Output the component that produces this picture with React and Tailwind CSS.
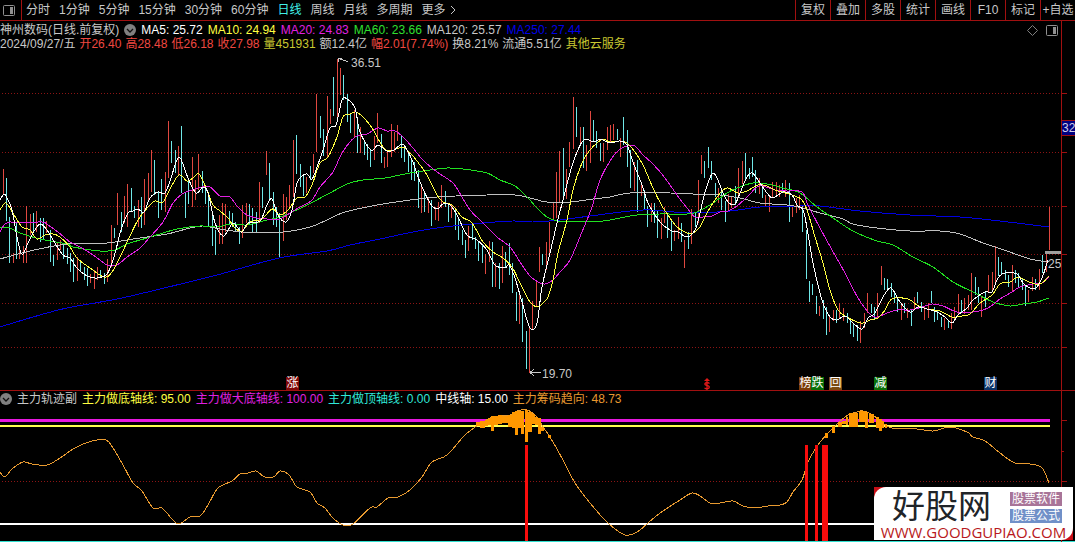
import { useState } from 'react';
import clsx from 'clsx';

const PERIODS = ['分时', '1分钟', '5分钟', '15分钟', '30分钟', '60分钟', '日线', '周线', '月线', '多周期'];
const TOOLS = ['复权', '叠加', '多股', '统计', '画线', 'F10', '标记', '+自选'];

const PLOT_WIDTH = 1061;
const PRICE_TOP = 51;
const PRICE_HEIGHT = 339;
const TREND_TOP = 407;
const TREND_HEIGHT = 135;

const MA_LEGEND = [
  { text: 'MA5: 25.72', color: 'text-white' },
  { text: 'MA10: 24.94', color: 'text-[#ffff40]' },
  { text: 'MA20: 24.83', color: 'text-[#e020e0]' },
  { text: 'MA60: 23.66', color: 'text-[#30e030]' },
  { text: 'MA120: 25.57', color: 'text-[#c8c8c8]' },
  { text: 'MA250: 27.44', color: 'text-[#0000e8]' },
];

const QUOTE = [
  { text: '2024/09/27/五', color: 'text-[#c8c8c8]' },
  { text: '开26.40', color: 'text-[#f04840]' },
  { text: '高28.48', color: 'text-[#f04840]' },
  { text: '低26.18', color: 'text-[#f04840]' },
  { text: '收27.98', color: 'text-[#f04840]' },
  { text: '量451931', color: 'text-[#c8c830]' },
  { text: '额12.4亿', color: 'text-[#c8c8c8]' },
  { text: '幅2.01(7.74%)', color: 'text-[#f04840]' },
  { text: '换8.21%', color: 'text-[#c8c8c8]' },
  { text: '流通5.51亿', color: 'text-[#c8c8c8]' },
  { text: '其他云服务', color: 'text-[#c8c830]' },
];

const TREND_LEGEND = [
  { text: '主力轨迹副', color: 'text-[#c8c8c8]' },
  { text: '主力做底轴线: 95.00', color: 'text-[#ffff40]' },
  { text: '主力做大底轴线: 100.00', color: 'text-[#e020e0]' },
  { text: '主力做顶轴线: 0.00', color: 'text-[#30e8d8]' },
  { text: '中线轴: 15.00', color: 'text-white' },
  { text: '主力筹码趋向: 48.73', color: 'text-[#e89830]' },
];

const MARKERS = [
  { x: 286, label: '涨', bg: 'bg-[#800808]' },
  { x: 799, label: '榜', bg: 'bg-[#7a3c08]' },
  { x: 811, label: '跌', bg: 'bg-[#087008]' },
  { x: 829, label: '回', bg: 'bg-[#7a4a10]' },
  { x: 874, label: '减', bg: 'bg-[#087008]' },
  { x: 984, label: '财', bg: 'bg-[#0c3468]' },
];

const GRID = [93, 152, 206, 254, 303, 347];

// x, high, low, direction
const BARS = `
3,169,195,r 6,178,221,c 9,217,263,c 13,253,263,r 16,223,259,c 19,247,259,r 23,246,263,r 26,206,263,r 30,214,235,r 33,213,232,c
36,211,232,r 40,218,242,c 43,218,240,c 46,221,233,r 50,230,262,c 53,255,266,c 57,243,260,r 60,240,250,r 63,245,259,c 67,248,264,c
70,253,272,c 73,258,282,c 77,257,281,r 80,260,272,c 84,267,280,c 87,268,286,c 90,274,283,r 94,270,289,r 97,267,280,r 100,270,277,c
104,273,284,c 107,259,282,r 111,225,267,r 114,228,238,c 117,193,225,r 121,212,232,c 124,196,223,r 127,184,227,r 131,188,211,c 134,206,218,c
138,200,227,r 141,197,228,c 144,179,225,r 148,173,200,r 151,150,192,r 154,160,195,c 158,192,218,c 161,179,210,c 165,172,212,r 168,121,178,r
171,141,163,c 175,150,173,c 178,146,175,r 181,126,193,c 185,192,218,c 188,180,204,c 192,157,207,r 195,180,200,r 198,154,190,r 202,171,193,c
205,185,204,c 208,193,227,c 212,215,246,c 215,230,255,c 219,215,244,r 222,203,244,r 225,204,232,r 229,211,225,c 232,213,227,c 235,222,232,c
239,227,244,c 242,205,238,r 246,203,223,r 249,204,225,c 252,208,232,c 256,212,232,c 259,182,223,r 262,187,208,c 266,151,175,r 269,163,200,c
273,192,225,c 276,207,227,c 279,213,258,c 283,194,241,r 286,197,220,r 289,185,208,r 293,140,197,r 296,135,174,c 300,164,187,c 303,175,196,c
306,177,193,r 310,166,180,c 313,154,173,r 316,94,152,r 320,116,138,c 323,129,156,c 327,96,158,r 330,109,124,r 333,77,116,c 337,59,122,r
340,68,95,r 343,75,100,c 347,94,122,c 350,113,133,c 354,110,138,r 357,117,153,c 360,127,153,r 364,141,155,c 367,144,160,c 370,150,167,c
374,136,160,r 377,113,143,r 381,134,163,c 384,157,168,r 387,152,167,r 391,124,157,r 394,132,152,r 397,125,141,r 401,135,158,c 404,145,162,c
408,152,172,c 411,160,180,c 414,162,181,c 418,170,208,c 421,187,213,r 424,193,212,c 428,198,213,r 431,200,226,c 435,207,220,r 438,202,221,r
441,185,208,r 445,191,207,c 448,203,222,c 451,205,218,r 455,209,230,c 458,217,240,c 462,230,245,c 465,240,258,c 468,226,251,r 472,224,240,c
475,237,249,c 478,242,261,c 482,244,263,c 485,254,274,r 489,241,262,r 492,242,287,c 495,263,287,r 499,263,289,c 502,246,283,r 505,252,267,c
509,243,275,c 512,263,293,c 516,292,321,c 519,295,324,r 522,298,342,c 526,331,369,c 529,327,373,r 532,301,330,r 536,282,307,r 539,247,272,r
542,254,265,c 546,242,270,r 549,222,254,r 553,202,221,r 556,172,218,r 559,151,202,r 563,148,199,c 566,169,199,r 569,142,167,r 573,97,149,r
576,107,137,c 580,127,143,r 583,127,168,c 586,145,171,r 590,111,163,r 593,120,142,c 596,131,148,c 600,143,161,c 603,143,162,r 607,127,150,r
610,125,142,r 613,124,140,r 617,129,140,c 620,138,157,r 623,117,145,c 627,130,167,c 630,150,188,c 634,162,191,r 637,160,212,c 641,182,196,r
644,190,209,c 647,206,227,c 651,203,222,r 654,203,223,c 657,211,238,c 661,218,239,r 664,207,223,r 667,214,238,c 671,220,251,c 674,230,241,r
678,217,239,r 681,223,242,c 684,240,268,r 688,232,249,c 691,209,244,r 695,213,227,c 698,180,223,r 701,155,174,r 704,161,178,c 708,147,168,c
711,161,180,c 715,183,197,c 718,188,203,r 721,192,210,c 725,201,222,c 728,194,212,r 731,196,208,r 735,186,205,c 738,168,197,r 742,161,184,r
745,153,180,c 749,168,179,c 752,157,177,c 755,170,193,c 759,178,194,r 762,187,198,c 765,195,206,r 769,197,212,r 772,182,197,r 776,182,197,r
779,185,197,r 782,183,192,c 785,180,197,r 789,183,222,c 792,205,217,r 796,198,213,r 799,195,210,r 802,205,232,c 806,230,279,c 809,281,302,c
812,284,295,c 816,296,314,c 819,306,316,r 823,300,319,c 826,307,335,c 829,316,332,r 833,310,321,r 836,310,323,c 839,303,318,r 843,308,321,r
847,313,323,c 850,320,334,c 853,323,337,c 857,325,341,c 860,321,343,r 864,313,328,r 867,293,313,r 871,304,313,c 874,307,320,c 877,293,318,r
881,266,285,r 884,278,290,c 887,279,289,c 891,283,297,c 894,292,303,c 897,298,312,c 901,303,320,r 904,303,313,c 907,308,318,r 911,309,326,c
914,297,310,r 917,292,303,c 921,302,312,c 924,307,320,r 928,303,318,r 931,291,303,c 934,307,322,c 937,310,320,c 941,317,327,c 944,318,330,r
948,320,328,c 951,313,329,r 954,307,321,r 958,294,314,r 961,300,313,c 964,298,314,r 968,295,310,r 971,273,310,r 975,277,295,c 978,287,303,c
981,297,317,r 985,292,307,c 988,275,292,r 992,272,292,r 995,246,282,r 998,257,276,c 1001,262,275,c 1005,270,280,c 1008,275,287,c 1012,265,292,r
1015,270,283,c 1018,273,287,c 1022,278,290,c 1025,286,306,c 1028,290,302,r 1032,277,291,r 1035,279,290,c 1039,269,290,r 1042,255,273,c
1046,253,272,r 1049,207,250,r
`.trim().split(/\s+/).map(s => s.split(','));

const MA_LINES = [
  {
    color: '#0000e0',
    points: '0,327 33,317 67,308 117,299 160,289 217,275 279,258 327,251 350,245 380,239 403,234 430,229 453,226 483,223 513,221 533,222 560,220 590,216 630,211 650,210 690,213 730,211 760,207 800,206 820,206 860,211 910,215 960,217 1000,221 1049,227',
  },
  {
    color: '#c0c0c0',
    points: '0,259 30,251 67,244 107,243 133,239 167,234 190,228 203,226 220,229 243,232 283,232 310,227 327,220 345,212 377,205 403,201 437,197 487,195 515,195 530,198 547,202 570,202 593,199 610,197 630,193 670,193 693,194 720,195 740,198 760,203 787,205 803,208 820,213 843,219 853,224 877,228 910,231 940,231 960,234 983,243 1007,251 1030,259 1049,262',
  },
  {
    color: '#20e020',
    points: '0,227 10,228 20,233 40,239 67,244 73,247 100,251 115,250 127,244 147,238 177,229 200,226 217,227 230,224 247,225 263,221 280,217 290,213 307,205 330,193 347,184 363,180 385,178 410,173 430,170 447,168 463,169 487,173 500,180 515,186 528,198 537,208 547,217 557,221 570,222 603,221 620,218 637,215 660,214 687,214 697,212 713,203 727,193 737,188 753,183 767,184 783,188 800,193 817,207 833,218 853,231 877,241 893,245 913,257 933,267 953,282 973,292 993,302 1010,306 1023,304 1037,302 1049,298',
  },
  {
    color: '#e020e0',
    points: '0,232 4,225 10,222 20,223 42,222 48,225 58,232 70,242 80,247 90,253 100,260 107,265 117,265 127,257 140,248 150,237 163,222 173,203 182,194 192,190 202,187 210,187 220,196 230,197 237,206 247,215 257,218 267,219 280,219 290,213 300,207 312,200 320,187 333,172 342,153 355,137 367,134 378,128 387,131 395,131 403,137 413,148 423,160 437,172 453,183 462,197 470,210 483,223 497,237 510,247 520,262 530,276 538,282 545,284 553,280 560,272 570,260 582,232 592,207 600,180 612,158 620,149 628,146 635,146 643,155 653,164 665,178 677,195 687,208 695,217 703,217 712,216 720,212 728,211 737,206 747,197 757,187 763,186 775,190 787,191 802,192 808,205 820,228 832,250 845,273 858,298 870,314 877,317 887,313 897,310 910,310 922,307 932,304 943,306 957,312 973,312 988,308 1000,299 1012,292 1020,287 1033,284 1042,283 1049,277',
  },
  {
    color: '#ffff40',
    points: '0,210 6,203 14,215 22,227 30,230 37,239 45,235 53,234 60,237 70,247 77,258 90,268 104,277 112,272 120,257 130,236 138,220 148,207 155,201 163,202 170,189 179,175 187,181 193,178 199,174 207,190 213,205 220,211 228,218 235,228 242,231 250,222 262,219 272,209 280,215 288,210 297,198 305,197 312,185 320,163 328,157 337,137 343,117 350,114 356,112 363,117 372,128 383,147 390,151 402,147 407,150 413,156 420,165 427,175 437,195 443,202 452,205 462,217 472,223 483,242 493,252 503,258 512,267 520,283 530,302 538,307 544,302 548,297 553,280 558,253 567,220 573,190 582,163 590,150 597,143 603,139 610,142 620,141 627,143 635,152 643,165 653,188 662,206 668,215 677,227 687,233 693,233 700,227 707,213 713,203 722,191 728,188 738,193 747,191 758,185 767,186 775,190 792,195 802,200 808,213 815,237 823,263 830,290 838,310 847,317 857,322 863,323 870,320 878,318 885,310 892,299 908,299 917,305 927,309 940,311 952,317 962,316 970,314 980,303 992,295 1000,284 1010,282 1018,277 1027,281 1035,284 1042,283 1049,276',
  },
  {
    color: '#ffffff',
    points: '0,200 4,194 7,198 12,210 17,237 20,250 23,254 28,243 33,233 40,224 47,230 53,240 63,255 70,258 77,268 87,276 97,278 107,274 114,257 121,230 128,213 133,211 138,209 144,212 150,198 158,192 165,193 171,178 179,157 188,178 196,193 203,187 208,193 215,223 223,236 228,230 233,223 238,228 242,232 248,223 260,221 267,205 272,199 278,215 286,222 292,210 297,183 302,176 307,174 312,179 317,167 323,150 330,128 336,125 342,100 347,99 355,108 360,132 371,150 378,145 387,151 394,150 402,144 407,150 413,162 420,182 430,203 437,209 443,204 450,205 457,215 467,235 477,240 487,250 495,265 505,268 509,265 515,278 522,302 530,328 537,323 542,287 550,253 557,223 563,200 570,173 575,157 582,142 587,139 593,142 598,140 603,140 610,143 620,141 627,145 633,162 642,185 648,203 657,218 663,225 672,231 678,232 687,237 695,230 700,213 705,192 712,174 717,178 723,193 729,203 735,204 740,193 747,177 752,173 758,180 767,193 773,198 783,192 792,195 797,205 803,210 807,228 813,263 822,300 830,317 837,320 845,316 853,323 862,329 868,318 875,313 883,297 891,288 900,302 910,312 918,307 927,309 937,312 945,317 952,323 958,315 967,308 973,300 985,292 992,292 998,278 1005,273 1017,274 1023,283 1030,288 1036,288 1042,278 1048,260',
  },
];

const TREND_POINTS = '0,472 5,477 12,469 23,462 32,464 47,465 60,458 75,448 92,441 106,440 113,448 123,465 133,483 142,491 153,508 162,508 172,519 179,524 190,517 200,516 208,505 218,488 232,481 240,474 248,473 256,471 263,476 269,478 275,476 280,471 289,475 297,487 310,492 317,503 325,508 333,518 343,525 353,524 370,508 377,507 388,498 398,497 410,490 422,477 432,462 447,455 465,435 480,424 493,417 510,415 517,411 527,410 537,417 543,427 550,437 563,460 575,483 590,503 608,523 625,535 637,532 648,523 660,513 680,500 692,493 700,496 710,503 720,503 733,501 743,506 755,508 768,506 780,505 787,502 793,492 802,480 808,462 818,445 828,433 838,423 848,415 857,412 863,411 873,415 882,423 892,428 917,429 933,431 950,427 967,432 973,437 985,441 1000,453 1015,463 1030,464 1042,468 1049,483';

// left, right, top, bottom
const CHIP_BARS = [
  [476, 480, 422, 426], [480, 485, 421, 428], [485, 488, 420, 426], [488, 491, 418, 425],
  [491, 494, 416, 431], [494, 498, 416, 425], [498, 502, 415, 424], [502, 508, 416, 423],
  [508, 512, 415, 427], [512, 515, 412, 428], [515, 518, 411, 435], [518, 521, 411, 428],
  [521, 524, 411, 434], [525, 528, 410, 442], [528, 532, 412, 432], [532, 535, 414, 424],
  [535, 538, 417, 425], [538, 541, 418, 434], [541, 544, 427, 431], [548, 551, 435, 438],
  [825, 828, 433, 438], [832, 835, 426, 433], [838, 842, 422, 427], [842, 846, 421, 424],
  [846, 848, 417, 425], [849, 858, 413, 427], [859, 865, 411, 422], [865, 868, 412, 428],
  [869, 874, 414, 423], [876, 879, 417, 428], [879, 882, 419, 431], [882, 884, 421, 428],
  [885, 887, 424, 428],
];

const SIGNALS = [[525, 3], [805, 3], [815, 3], [822, 6]];

// Catmull-Rom spline through the points
function smooth(points) {
  const p = points.split(' ').map(s => s.split(',').map(Number));
  let d = `M${p[0][0]} ${p[0][1]}`;
  for (let i = 0; i < p.length - 1; i++) {
    const a = p[i - 1] || p[i];
    const b = p[i];
    const c = p[i + 1];
    const e = p[i + 2] || c;
    const c1 = [b[0] + (c[0] - a[0]) / 6, b[1] + (c[1] - a[1]) / 6];
    const c2 = [c[0] - (e[0] - b[0]) / 6, c[1] - (e[1] - b[1]) / 6];
    d += `C${c1.join(' ')} ${c2.join(' ')} ${c.join(' ')}`;
  }
  return d;
}

const left = x => ({ left: `${(x / PLOT_WIDTH) * 100}%` });

function PanelIcon({ className }) {
  return (
    <svg className={className} width="12" height="11" viewBox="0 0 12 11" aria-hidden="true">
      <rect x="0.5" y="0.5" width="11" height="10" rx="1" fill="none" stroke="#909090" />
      <rect x="7" y="2" width="3" height="7" fill="#909090" />
    </svg>
  );
}

function CollapseButton({ label }) {
  return (
    <button type="button" aria-label={label} className="shrink-0">
      <svg width="12" height="12" viewBox="0 0 12 12" className="block">
        <circle cx="6" cy="6" r="6" fill="#808080" />
        <path d="M3 5l3 3 3-3" fill="none" stroke="#101010" strokeWidth="1.3" />
      </svg>
    </button>
  );
}

function Toolbar() {
  const [period, setPeriod] = useState('日线');
  return (
    <header className="flex h-[21px] items-stretch overflow-hidden border-b border-[#a01010] text-[#c8c8c8]">
      <button type="button" aria-label="侧栏" className="flex w-[22px] shrink-0 items-center border-r border-[#a01010] pl-[3px]">
        <PanelIcon />
      </button>
      <nav className="flex flex-1 items-center gap-[9px] pl-1 whitespace-nowrap">
        {PERIODS.map(p => (
          <button
            key={p}
            type="button"
            onClick={() => setPeriod(p)}
            className={clsx(p === period && 'text-[#40f0e8]')}
          >
            {p}
          </button>
        ))}
        <button type="button" className="flex items-center gap-1">
          更多
          <svg width="6" height="10" viewBox="0 0 6 10" aria-hidden="true">
            <path d="M1 1l4 4-4 4" fill="none" stroke="#c8c8c8" />
          </svg>
        </button>
      </nav>
      <div className="flex shrink-0">
        {TOOLS.map(t => (
          <button key={t} type="button" className="w-[35px] border-l border-[#a01010] text-center whitespace-nowrap">
            {t}
          </button>
        ))}
      </div>
    </header>
  );
}

function Legend({ items }) {
  return items.map(item => (
    <span key={item.text} className={item.color}>{item.text}</span>
  ));
}

function PriceChart() {
  return (
    <div className="relative">
      <svg
        className="block h-[339px] w-full"
        viewBox={`0 ${PRICE_TOP} ${PLOT_WIDTH} ${PRICE_HEIGHT}`}
        preserveAspectRatio="none"
        shapeRendering="crispEdges"
      >
        {GRID.map(y => (
          <path key={y} d={`M2 ${y}.5H${PLOT_WIDTH}`} stroke="#8c1414" strokeDasharray="1 2" />
        ))}
        {BARS.map(([x, high, low, dir]) => (
          <rect key={x} x={x} y={high} width="1" height={low - high} fill={dir === 'r' ? '#e04840' : '#70e8e8'} />
        ))}
        {MA_LINES.map(line => (
          <path key={line.color} d={smooth(line.points)} fill="none" stroke={line.color} />
        ))}
        <rect x="1045" y="251" width="16" height="3" fill="#a0a0a0" />
        <path d="M338 58.5l10 3M338 58.5h4M338.500 58v4" fill="none" stroke="#c8c8c8" />
        <path d="M530 372.500h11M530 372.500l4-3M530 372.500l4 3" fill="none" stroke="#c8c8c8" />
      </svg>
      <span className="absolute top-[5px] text-[#c8c8c8]" style={left(351)}>36.51</span>
      <span className="absolute top-[316px] text-[#c8c8c8]" style={left(542)}>19.70</span>
      <span className="absolute top-[206px] text-[#c8c8c8]" style={left(1048)}>25</span>
      {MARKERS.map(m => (
        <span
          key={m.label}
          className={clsx('absolute bottom-0 size-[13px] text-center leading-[13px] text-white', m.bg)}
          style={left(m.x)}
        >
          {m.label}
        </span>
      ))}
      <svg className="absolute bottom-0 h-3 w-2" style={left(703)} viewBox="0 0 8 12" aria-label="$">
        <path d="M4 0L7 3H1z" fill="#e01818" />
        <path d="M6.500 5.500Q4 3.500 2 5.500Q1.500 7 4 7.500Q7 8 6 10Q4 11.500 1.500 10M4 3v9" fill="none" stroke="#e01818" strokeWidth="1.300" />
      </svg>
    </div>
  );
}

function TrendChart() {
  return (
    <svg
      className="block h-[135px] w-full"
      viewBox={`0 ${TREND_TOP} ${PLOT_WIDTH} ${TREND_HEIGHT}`}
      preserveAspectRatio="none"
      shapeRendering="crispEdges"
    >
      <path d={`M2 481.500H${PLOT_WIDTH}`} stroke="#8c1414" strokeDasharray="1 2" />
      <rect x="0" y="419" width="1050" height="3" fill="#e818e0" />
      <rect x="0" y="425" width="1050" height="2" fill="#ffff50" />
      <rect x="0" y="523" width="1050" height="2" fill="#ffffff" />
      <path d={smooth(TREND_POINTS)} fill="none" stroke="#e89a30" />
      {CHIP_BARS.map(([x1, x2, top, bottom]) => (
        <rect key={x1} x={x1} y={top} width={x2 - x1} height={bottom - top} fill="#ff9800" />
      ))}
      {SIGNALS.map(([x, w]) => (
        <rect key={x} x={x} y="445" width={w} height="97" fill="#f80c0c" />
      ))}
      <rect x="0" y="541" width={PLOT_WIDTH} height="1" fill="#30e0d0" />
    </svg>
  );
}

function Watermark() {
  return (
    <a
      href="#home"
      className="absolute right-[2px] bottom-[2px] block w-[199px] bg-[#c81018]"
    >
      <span className="block h-[53px] rounded-tl-[12px] rounded-br-[12px] bg-white px-[6px] pt-[3px]">
        <span className="flex justify-between pr-[5px] pl-3">
          <span className="text-[33px] leading-[34px] text-[#202428]">好股网</span>
          <span className="flex flex-col gap-[3px] pt-[2px] leading-[14px] text-white">
            <span className="bg-[#a87498] px-[2px]">股票软件</span>
            <span className="bg-[#7090c8] px-[2px]">股票公式</span>
          </span>
        </span>
        <span className="block text-center font-['Open_Sans',sans-serif] text-[15px] leading-[16px] whitespace-nowrap text-[#b81820]">
          WWW.GOODGUPIAO.COM
        </span>
      </span>
    </a>
  );
}

export default function App() {
  return (
    <div className="relative min-h-screen overflow-hidden bg-black font-['Liberation_Sans','Noto_Sans_CJK_SC',sans-serif] text-[12px] leading-[14px]">
      <Toolbar />

      {/* Price pane */}
      <section className="flex border-b border-[#a01010]">
        <div className="min-w-0 flex-1">
          <div className="flex pt-[2px] whitespace-nowrap">
            <div className="flex flex-1 items-center gap-[5px]">
              <h1 className="text-[#c8c8c8]">神州数码(日线.前复权)</h1>
              <CollapseButton label="收起主图" />
              <Legend items={MA_LEGEND} />
            </div>
            <div className="flex items-center gap-2 pr-[3px]">
              <svg width="11" height="11" viewBox="0 0 11 11" aria-hidden="true">
                <path d="M5.500 0.500l5 5-5 5-5-5z" fill="none" stroke="#808080" />
              </svg>
              <PanelIcon />
            </div>
          </div>
          <div className="flex h-[14px] items-center gap-[4px] whitespace-nowrap">
            <Legend items={QUOTE} />
          </div>
          <PriceChart />
        </div>
        <div className="relative w-[14px] shrink-0 overflow-hidden border-l border-[#a01010]">
          <svg className="block h-[369px] w-full" viewBox="0 21 13 369" shapeRendering="crispEdges">
            {GRID.map(y => (
              <path key={y} d={`M0 ${y}.5h5`} stroke="#a01010" />
            ))}
          </svg>
          <span className="absolute top-[99px] left-0 w-5 border-y border-[#a01010] bg-[#000080] text-[#d0d0e8]">32</span>
        </div>
      </section>

      {/* Indicator pane */}
      <section className="flex">
        <div className="min-w-0 flex-1">
          <div className="flex h-4 items-center gap-[5px] whitespace-nowrap">
            <CollapseButton label="收起副图" />
            <Legend items={TREND_LEGEND} />
          </div>
          <TrendChart />
        </div>
        <div className="w-[14px] shrink-0 border-l border-[#a01010]">
          <svg className="block h-[151px] w-full" viewBox="0 391 13 151" shapeRendering="crispEdges">
            <path d="M0 420.500h5M0 451.500h2M0 481.500h5" stroke="#a01010" />
            <path d="M0 541.500h13" stroke="#30e0d0" />
          </svg>
        </div>
      </section>

      <Watermark />
    </div>
  );
}
